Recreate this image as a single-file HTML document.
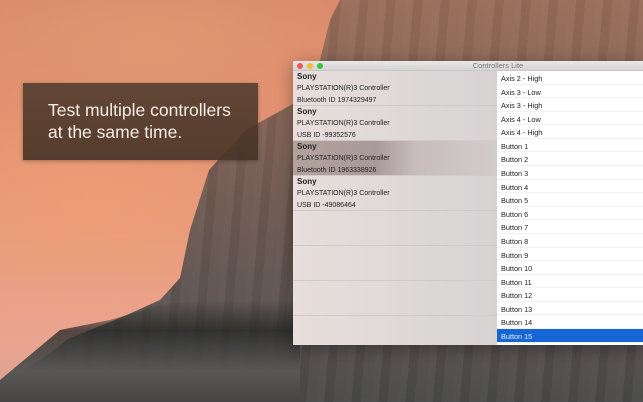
<!DOCTYPE html>
<html><head><style>
*{margin:0;padding:0;box-sizing:border-box}
body{width:643px;height:402px;overflow:hidden;position:relative;font-family:"Liberation Sans",sans-serif;
background:linear-gradient(180deg,#d98a6a 0%,#e39272 30%,#e89c80 60%,#eaa590 85%,#d8a090 100%)}
.sky2{position:absolute;inset:0;background:radial-gradient(ellipse 200px 120px at 90px 200px,rgba(240,160,110,.6),transparent),radial-gradient(ellipse 220px 90px at 150px 40px,rgba(230,160,120,.5),transparent)}
.rock{position:absolute;inset:0;clip-path:polygon(340px 0,643px 0,643px 402px,0 402px,0 382px,40px 360px,70px 338px,120px 318px,160px 300px,180px 278px,190px 230px,209px 170px,246px 130px,300px 100px,320px 60px,330px 20px);
background:linear-gradient(180deg,#9a6d5a 0%,#8a6656 20%,#6f5a52 50%,#5f5552 75%,#4a4a4a 100%)}
.rock3{position:absolute;inset:0;clip-path:polygon(340px 0,643px 0,643px 402px,0 402px,0 382px,40px 360px,70px 338px,120px 318px,160px 300px,180px 278px,190px 230px,209px 170px,246px 130px,300px 100px,320px 60px,330px 20px);
background:repeating-linear-gradient(95deg,rgba(255,255,255,.03) 0 7px,rgba(0,0,0,.05) 7px 16px,rgba(255,255,255,.02) 16px 27px)}
.trees{position:absolute;left:0;top:300px;width:300px;height:102px;background:linear-gradient(180deg,rgba(30,35,30,0),rgba(35,38,35,.75) 30%,#5a5856 70%,#464444);clip-path:polygon(0 80px,60px 30px,110px 20px,160px 5px,200px 0,300px 0,300px 102px,0 102px)}
.box{position:absolute;left:23px;top:83px;width:235px;height:77px;background:linear-gradient(180deg,rgba(80,60,45,.88),rgba(70,50,38,.9));box-shadow:0 1px 4px rgba(0,0,0,.3)}
.box p{position:absolute;left:25px;top:16px;color:#f5ede6;font-size:17.5px;line-height:22px}
.win{position:absolute;left:293px;top:61px;width:350px;height:284px;box-shadow:0 4px 16px rgba(0,0,0,.35)}
.tb{height:10px;background:linear-gradient(#e8e6e6,#d6d4d4);border-bottom:1px solid #c8c6c6;position:relative;font-size:7.5px;color:#777;text-align:center;line-height:10px;padding-left:60px}
.dot{position:absolute;top:2px;width:6px;height:6px;border-radius:50%}
.left{position:absolute;left:0;top:10px;width:204px;height:274px;background:linear-gradient(90deg,#e8dedb,#ddd8d8 60%,#d7d3d4)}
.row{height:35px;border-bottom:1px solid #cfcbcb;padding:0 0 0 4px;font-size:7px;color:#222}
.row div{height:12px;line-height:12px}
.row b{font-size:8px}
.sel{background:linear-gradient(90deg,#b3a29b 0%,#a9999a 40%,#c8bcbc 60%,#d3cccc 100%)}
.right{position:absolute;left:204px;top:10px;width:146px;height:274px;background:#fff}
.it{height:13.58px;border-bottom:1px solid #f2f2f2;font-size:7.3px;line-height:13px;padding:1px 0 0 4px;color:#222}
.hl{background:#1566d4;color:#e8f0ff}
</style></head><body>
<div class="sky2"></div>
<div class="rock"></div>
<div class="rock3"></div>
<div class="trees"></div>
<div class="box"><p>Test multiple controllers<br>at the same time.</p></div>
<div class="win">
<div class="tb"><span class="dot" style="left:4px;background:#ec5b52"></span><span class="dot" style="left:14px;background:#f4bc30"></span><span class="dot" style="left:24px;background:#3dc43f"></span>Controllers Lite</div>
<div class="left">
<div class="row"><div><b>Sony</b></div><div>PLAYSTATION(R)3 Controller</div><div>Bluetooth ID 1974329497</div></div>
<div class="row"><div><b>Sony</b></div><div>PLAYSTATION(R)3 Controller</div><div>USB ID -99352576</div></div>
<div class="row sel"><div><b>Sony</b></div><div>PLAYSTATION(R)3 Controller</div><div>Bluetooth ID 1963338926</div></div>
<div class="row"><div><b>Sony</b></div><div>PLAYSTATION(R)3 Controller</div><div>USB ID -49086464</div></div>
<div class="row"></div><div class="row"></div><div class="row"></div><div class="row" style="border:0"></div>
</div>
<div class="right">
<div class="it">Axis 2 - High</div><div class="it">Axis 3 - Low</div><div class="it">Axis 3 - High</div><div class="it">Axis 4 - Low</div><div class="it">Axis 4 - High</div>
<div class="it">Button 1</div><div class="it">Button 2</div><div class="it">Button 3</div><div class="it">Button 4</div><div class="it">Button 5</div><div class="it">Button 6</div><div class="it">Button 7</div><div class="it">Button 8</div><div class="it">Button 9</div><div class="it">Button 10</div><div class="it">Button 11</div><div class="it">Button 12</div><div class="it">Button 13</div><div class="it">Button 14</div><div class="it hl">Button 15</div>
</div>
</div>
</body></html>
